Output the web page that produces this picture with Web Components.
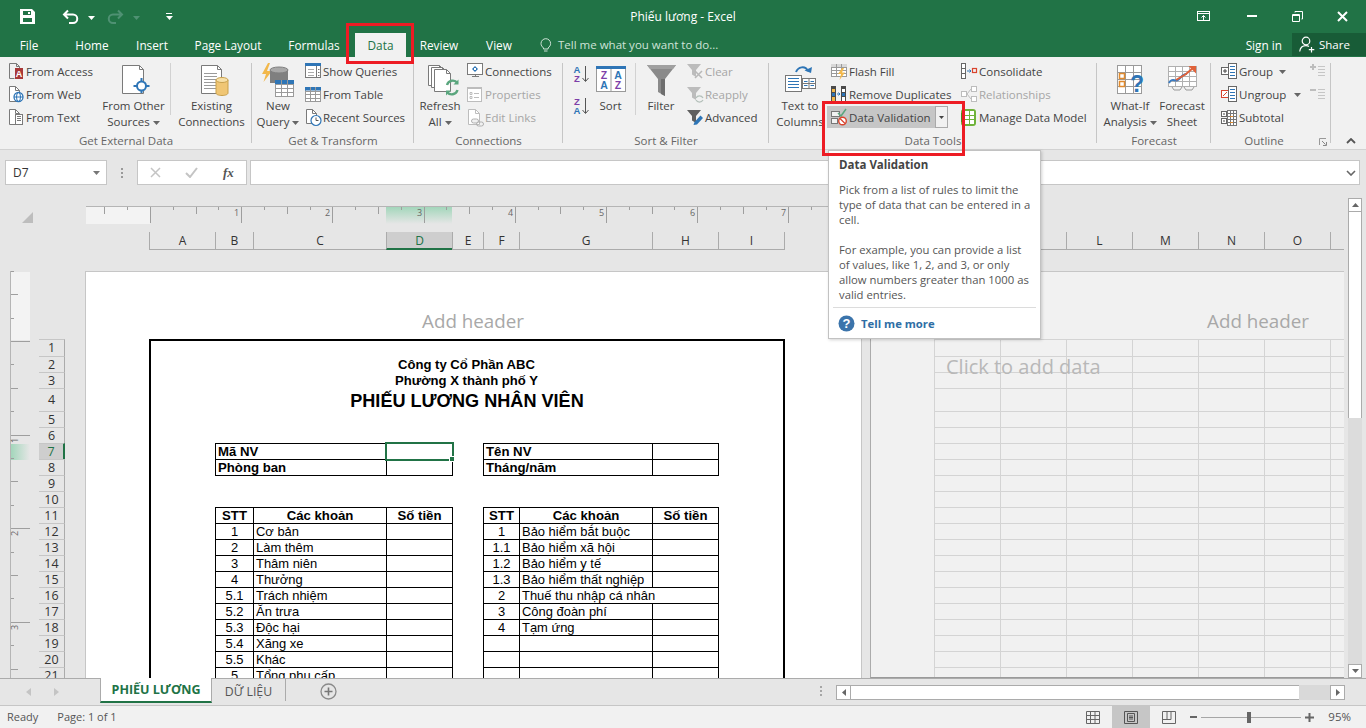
<!DOCTYPE html>
<html lang="vi"><head><meta charset="utf-8"><title>Phiếu lương - Excel</title>
<style>
html,body{margin:0;padding:0;background:#e6e6e6;overflow:hidden}
body{font-family:"Open Sans","Noto Sans",sans-serif;font-size:11.5px;color:#444}
x-tab[active]{color:#217346}
</style></head><body>
<x-app>
  <x-titlebar>Phiếu lương - Excel</x-titlebar>
  <x-tabs>
    <x-tab style="width:58px">File</x-tab><x-tab style="width:68px">Home</x-tab><x-tab style="width:52px">Insert</x-tab><x-tab style="width:100px">Page Layout</x-tab><x-tab style="width:72px;margin-right:5px">Formulas</x-tab><x-tab active style="width:51px">Data</x-tab><x-tab style="width:66px">Review</x-tab><x-tab style="width:54px">View</x-tab>
  </x-tabs>
  <x-ribbon>
    <x-group w="252" label="Get External Data">
      <x-col left="7" w="99"><x-small icon="access">From Access</x-small><x-small icon="web">From Web</x-small><x-small icon="text">From Text</x-small></x-col>
      <x-big w="69" icon="other" caret>From Other<br>Sources</x-big>
      <x-vsep w="3"></x-vsep>
      <x-big w="81" icon="existing">Existing<br>Connections</x-big>
    </x-group>
    <x-group w="162" label="Get &amp; Transform">
      <x-big w="52" icon="newquery" caret>New<br>Query</x-big>
      <x-col w="110"><x-small icon="showq">Show Queries</x-small><x-small icon="fromtable">From Table</x-small><x-small icon="recent">Recent Sources</x-small></x-col>
    </x-group>
    <x-group w="149" label="Connections">
      <x-big w="52" icon="refresh" caret>Refresh<br>All</x-big>
      <x-col w="97"><x-small icon="conn">Connections</x-small><x-small icon="props" off>Properties</x-small><x-small icon="links" off>Edit Links</x-small></x-col>
    </x-group>
    <x-group w="206" label="Sort &amp; Filter">
      <x-sortcol></x-sortcol>
      <x-big w="31" icon="sortbig">Sort</x-big>
      <x-vsep w="10" side="right"></x-vsep>
      <x-big w="50" icon="filter">Filter</x-big>
      <x-col w="83"><x-small icon="clear" off>Clear</x-small><x-small icon="reapply" off>Reapply</x-small><x-small icon="advanced">Advanced</x-small></x-col>
    </x-group>
    <x-group w="328" label="Data Tools">
      <x-big w="60" icon="t2c" style="margin-left:1px">Text to<br>Columns</x-big>
      <x-col w="130"><x-small icon="flash">Flash Fill</x-small><x-small icon="dedupe">Remove Duplicates</x-small><x-small icon="datav" hot>Data Validation</x-small></x-col>
      <x-col w="137"><x-small icon="consol">Consolidate</x-small><x-small icon="rel" off>Relationships</x-small><x-small icon="model">Manage Data Model</x-small></x-col>
    </x-group>
    <x-group w="114" label="Forecast">
      <x-big w="60" icon="whatif" caret style="margin-left:3px">What-If<br>Analysis</x-big>
      <x-big w="44" icon="forecast">Forecast<br>Sheet</x-big>
    </x-group>
    <x-group w="120" label="Outline" launcher>
      <x-col left="9" w="98"><x-small icon="group" drop="59">Group</x-small><x-small icon="ungroup" drop="74">Ungroup</x-small><x-small icon="subtotal">Subtotal</x-small></x-col>
      <x-col w="22"><x-small icon="showd" off></x-small><x-small icon="hided" off></x-small></x-col>
    </x-group>
    <x-collapse></x-collapse>
  </x-ribbon>
  <x-formula></x-formula>
  <x-sheet></x-sheet>
  <x-tabbar></x-tabbar>
  <x-status></x-status>
  <x-tooltip></x-tooltip>
  <x-redbox x="346" y="23" w="68" h="41"></x-redbox>
  <x-redbox x="822" y="101" w="143" h="55"></x-redbox>
</x-app>
<script>
const G='#7a7a7a',B='#2e75b6',L='#a9a9a9',LF='Liberation Sans';
const S=(w,h,b)=>`<svg xmlns="http://www.w3.org/2000/svg" width="${w}" height="${h}" viewBox="0 0 ${w} ${h}" fill="none" style="display:block;overflow:visible">${b}</svg>`;
const page=(x,y,w,h,c=G,f='#fff',d=4)=>`<path d="M${x}.5 ${y}.5h${w-d}l${d} ${d}v${h-d}h-${w}z" stroke="${c}" fill="${f}"/><path d="M${x+w-d}.5 ${y}.5v${d}h${d}" stroke="${c}"/>`;
const lines=(x,y,w,n,gap=3,c=G)=>{let s='';for(let i=0;i<n;i++)s+=`<path d="M${x} ${y+i*gap}.5h${w}" stroke="${c}"/>`;return s};
const T=(x,y,t,c,sz=9,w=700)=>`<text x="${x}" y="${y}" font-family="${LF}" font-size="${sz}" font-weight="${w}" fill="${c}" text-anchor="middle">${t}</text>`;
const tbl=(x,y,cw,rh,nc,nr,head,lc='#9a9a9a')=>{let s=`<rect x="${x}.5" y="${y}.5" width="${cw*nc}" height="${rh*nr}" fill="#fff" stroke="${lc}"/>`;if(head)s+=`<rect x="${x}" y="${y}" width="${cw*nc+1}" height="${rh}" fill="${head}"/>`;for(let i=1;i<nc;i++)s+=`<path d="M${x+i*cw}.5 ${y}v${rh*nr}" stroke="${lc}"/>`;for(let j=1;j<nr;j++)s+=`<path d="M${x} ${y+Math.round(j*rh)}.5h${cw*nc}" stroke="${lc}"/>`;return s};
const funnel=(f,st='none')=>`<path d="M1 2h14l-5 6v7l-4-2.5V8z" fill="${f}" stroke="${st}"/>`;
const ICON={
 save:S(15,15,`<path fill="#fff" fill-rule="evenodd" d="M0 0h12l3 3v12H0zM3 2v4h8V2zM3 9v4h9V9z"/><rect x="8" y="3" width="2" height="2" fill="#fff"/>`),
 undo:S(17,16,`<path d="M6 1.5 2 5.5l4 4M2 5.5h9a4 4 0 0 1 0 8.5H7" stroke="#fff" stroke-width="2"/>`),
 redo:S(17,16,`<path d="M11 1.5l4 4-4 4M15 5.5H6a4 4 0 0 0 0 8.5h3" stroke="#4f9173" stroke-width="2"/>`),
 cust:S(9,8,`<path d="M1 .5h6" stroke="#fff"/><path d="M1 3h7L4.5 7z" fill="#fff"/>`),
 ribbon:S(14,11,`<rect x=".5" y=".5" width="12" height="9" stroke="#fff"/><path d="M1 2.5h11" stroke="#fff"/><path d="M6.5 9V4.5M4.5 6.5l2-2 2 2" stroke="#fff"/>`),
 min:S(10,3,`<rect width="10" height="2" fill="#fff"/>`),
 rest:S(11,11,`<path d="M.5 3.5h7v7h-7zM.5 4.5h7" stroke="#fff"/><path d="M3 1.5V.5h7.5V8h-1" stroke="#fff"/>`),
 close:S(11,11,`<path d="M1 1l9 9M10 1l-9 9" stroke="#fff" stroke-width="2"/>`),
 bulb:S(12,14,`<path d="M3.5 10C2 8.5 1 7.500 1 5.500a4.800 4.800 0 0 1 9.600 0c0 2-1 3-2.500 4.500v1H3.500zM4 13h3.500" stroke="#cfe3d8"/>`),
 person:S(17,17,`<circle cx="7" cy="5" r="3.800" stroke="#fff" stroke-width="1.200"/><path d="M.7 15.500c.5-3.500 2.500-5.800 6.300-5.800 1.200 0 2.200.3 3 .8" stroke="#fff" stroke-width="1.200"/><path d="M12.500 11v5.500M9.800 13.700h5.500" stroke="#fff" stroke-width="1.200"/>`),
 access:S(19,19,`<path d="M2.500 1.500h7l3 3v2M2.500 1.500v15h5" stroke="${G}"/><path d="M9.500 1.500v3h3" stroke="${G}"/><rect x="8" y="6" width="8" height="11" fill="#a93838"/>${T(12,15,'A','#fff',9)}`),
 web:S(19,19,`${page(2,1,10,15)}<circle cx="11.500" cy="12" r="4.500" fill="#fff" stroke="${B}" stroke-width="1.300"/><ellipse cx="11.500" cy="12" rx="2" ry="4.500" stroke="${B}"/><path d="M7 12h9" stroke="${B}"/>`),
 text:S(19,19,`${page(2,1,10,15)}<rect x="8.500" y="6.500" width="7" height="10" fill="#fff" stroke="${G}"/>${lines(10,8,4,3,2)}`),
 other:S(32,36,`${page(4,4,21,28)}<path d="M15.500 25h16M23.500 17v15" stroke="${B}" stroke-width="2"/><circle cx="23.500" cy="25" r="4.500" fill="#fff" stroke="${B}" stroke-width="2"/>`),
 existing:S(36,36,`${page(7,4,20,28)}${lines(10,12,13,6,3,'#9a9a9a')}<path d="M22 19v13c0 1.500 2.700 2.500 6 2.500s6-1 6-2.500V19z" fill="#f0c674" stroke="#c9a14d"/><ellipse cx="28" cy="19" rx="6" ry="2.500" fill="#f7e0a8" stroke="#c9a14d"/>`),
 newquery:S(40,36,`<path d="M10 2 4 13h4l-2.500 8L14 10H9l3-8z" fill="#f2b84b"/><path d="M12 9v13h18V9z" fill="#7f7f7f"/><ellipse cx="21" cy="9" rx="9" ry="3" fill="#a8a8a8" stroke="#7f7f7f"/>${tbl(17,19,6,4,3,4,B)}`),
 showq:S(19,19,`<rect x="1.500" y="1.500" width="15" height="14" fill="#fff" stroke="${G}"/><rect x="1" y="1" width="16" height="3" fill="${B}"/><path d="M12.500 4v11" stroke="${G}"/>${lines(4,7,6,3,3,'#aaa')}${lines(14,7,1.500,3,3,'#777')}`),
 fromtable:S(19,19,tbl(1,2,5,3.500,3,4,B)),
 recent:S(19,19,`${page(2,1,10,14)}<circle cx="12" cy="12.500" r="5" fill="#fff" stroke="${B}" stroke-width="1.200"/><path d="M12 9.500v3h2.500" stroke="#555"/>`),
 refresh:S(40,36,`${page(8,4,15,20)}${page(11,6,15,20)}${page(14,8,16,22)}<path d="M27 24a6 6 0 0 1 10.500-2" stroke="#5aa67e" stroke-width="2.400"/><path d="M38.500 18.500v5h-5z" fill="#5aa67e"/><path d="M37.500 29a6 6 0 0 1-10.500 2" stroke="#5aa67e" stroke-width="2.400"/><path d="M26 34.500v-5h5z" fill="#5aa67e"/>`),
 conn:S(19,19,`<rect x="1.500" y="1.500" width="15" height="11" fill="#fff" stroke="${G}"/><path d="M6 14.500h7M9.500 13v1" stroke="${G}"/><path d="M9 4l3 3-3 3-3-3z" fill="${B}"/><rect x="8" y="6" width="2" height="2" fill="#fff"/>`),
 props:S(19,19,`<rect x="1.500" y="2.500" width="14" height="14" fill="#fff" stroke="#bdbdbd"/><rect x="1" y="2" width="15" height="2" fill="#bdbdbd"/><path d="M4 7.500h2v2H4zM4 11.500h2v2H4zM8 8.500h5M8 12.500h5" stroke="#bdbdbd"/>`),
 links:S(19,19,`${page(2,1,11,15,'#bdbdbd')}<rect x="5.500" y="11" width="7" height="4" rx="2" stroke="#b0b0b0" fill="#f1f1f1"/><rect x="10.500" y="14" width="7" height="4" rx="2" stroke="#b0b0b0"/>`),
 az:S(19,19,T(5,8,'A',B,9.500)+T(5,17,'Z','#7d3fa8',9.500)+`<path d="M13.500 1v15M10.500 13l3 3.500 3-3.500" stroke="#555"/>`),
 za:S(19,19,T(5,8,'Z','#7d3fa8',9.500)+T(5,17,'A',B,9.500)+`<path d="M13.500 1v15M10.500 13l3 3.500 3-3.500" stroke="#555"/>`),
 sortbig:S(34,36,`<rect x="2.500" y="5.500" width="29" height="25" fill="#fff" stroke="#999"/><rect x="2" y="5" width="30" height="3" fill="${B}"/><path d="M17 8v22" stroke="#999"/>`+T(10,18,'Z','#7d3fa8',10.500)+T(24,18,'A',B,10.500)+T(10,28,'A',B,10.500)+T(24,28,'Z','#7d3fa8',10.500)),
 filter:S(36,36,`<path d="M4 4h29L22 18v17l-7-4V18z" fill="#8a8a8a"/><path d="M4 4h29l-3 4H7z" fill="#a0a0a0"/><path d="M18 18v15l4 2V18z" fill="#6e6e6e"/>`),
 clear:S(19,19,funnel('#bcbcbc')+`<path d="M9 9l7 7M16 9l-7 7" stroke="#b8b8b8" stroke-width="1.500"/>`),
 reapply:S(19,19,funnel('#bcbcbc')+`<path d="M10 13a4 4 0 0 1 7 0M17 15a4 4 0 0 1-7 0" stroke="#b4c0ba" stroke-width="1.300"/>`),
 advanced:S(19,19,funnel('#5f5f5f')+`<path d="M7.500 17l1-3 6-6.500 2.500 2.500-6 6.500z" fill="${B}"/>`),
 t2c:S(36,36,`<path d="M14 11c2-5 9-7 12-1" stroke="${B}" stroke-width="2"/><path d="M22.500 9.500 29 12l1-6z" fill="${B}"/><rect x="3.500" y="14.500" width="16" height="16" fill="#fff" stroke="#777"/>${lines(6,17,11,4,3,B)}<rect x="20.500" y="17.500" width="13" height="10" fill="#fff" stroke="#777"/><path d="M27 18v9M21 22.500h12" stroke="#777"/><path d="M22 20.500h3.500M28.500 20.500H32M22 24.500h3.500M28.500 24.500H32" stroke="${B}"/>`),
 flash:S(19,19,tbl(1,2,5,3,3,4,'#d8d8d8')+`<path d="M12 6l-4 6h3l-1.500 6L15 10.500h-3l2-4.500z" fill="#f2b84b"/>`),
 dedupe:S(19,19,`<rect x="1" y="1" width="5" height="16" fill="#4a4a4a"/><rect x="2" y="4" width="3" height="3" fill="#f2b84b"/><rect x="2" y="8" width="3" height="3" fill="${B}"/><rect x="2" y="12" width="3" height="4" fill="#f2b84b"/><rect x="11" y="1" width="5" height="16" fill="#4a4a4a"/><rect x="12" y="4" width="3" height="3" fill="#fff"/><rect x="12" y="8" width="3" height="3" fill="${B}"/><rect x="12" y="12" width="3" height="4" fill="#fff"/><path d="M7 9h3M8.500 7.500 10 9l-1.500 1.500" stroke="${B}"/>`),
 datav:S(19,19,`<rect x="1.500" y="3.500" width="8" height="5" fill="#f1f1f1" stroke="#777"/><rect x="1.500" y="10.500" width="6" height="5" fill="#f1f1f1" stroke="#777"/><path d="M8 5l3 3 5-7" stroke="#5aa67e" stroke-width="1.500"/><circle cx="12.500" cy="13" r="3.800" fill="#fff" stroke="#d9442e" stroke-width="1.400"/><path d="M10 10.500l5 5" stroke="#d9442e" stroke-width="1.300"/>`),
 consol:S(19,19,`<rect x="1.500" y="1.500" width="4" height="15" fill="#fff" stroke="#666"/><path d="M1 6.500h5M1 11.500h5" stroke="#666"/><path d="M7 9h4M9.500 7.500 11 9l-1.500 1.500" stroke="${B}"/><rect x="12.500" y="6.500" width="4" height="4" stroke="#d9442e" stroke-width="1.200"/>`),
 rel:S(19,19,`<g stroke="#bdbdbd"><rect x="1.500" y="6.500" width="5" height="5" fill="#fff"/><rect x="11.500" y="1.500" width="5" height="5" fill="#fff"/><rect x="11.500" y="11.500" width="5" height="5" fill="#fff"/><path d="M7 9l4-5M7 9l4 5"/></g>`),
 model:S(19,19,`<rect x="1" y="1" width="15" height="17" rx="3" fill="#6fb33a"/><rect x="5" y="3" width="9" height="13" fill="#fff"/><path d="M9.500 3v13M5 7.500h9M5 11.500h9" stroke="#6fb33a"/><rect x="1" y="5" width="4" height="9" fill="#4f8f24"/>`),
 whatif:S(40,36,`${tbl(7,4,8,7,3,4,null,'#9a9a9a')}<rect x="9.500" y="12.500" width="5" height="5" fill="#fff" stroke="#e08a2e" stroke-width="1.500"/><rect x="9.500" y="20.500" width="5" height="5" fill="#fff" stroke="#e08a2e" stroke-width="1.500"/>${T(27,31,'?',B,23)}`),
 forecast:S(44,36,`${tbl(8,5,7,5,4,4,null,'#b0b0b0')}<path d="M9 22c3-6 6-1 9-3s5-7 9-6" stroke="#3d7cc0" stroke-width="2" /><path d="M16 19l5-3 5-3 7-6" stroke="#e0623a" stroke-width="2"/><path d="M28.500 5H36v7.500z" fill="#e0623a"/><path d="M12 26l2 3h6l2-3M24 26l2 3h6l2-3" stroke="#999"/>`),
 group:S(19,19,`<rect x="1.500" y="5.500" width="7" height="7" fill="#fff" stroke="#666"/><path d="M3 9h4M5 7v4" stroke="#444"/><rect x="8.500" y="1.500" width="8" height="15" fill="#fff" stroke="#666"/>${lines(10,4,5,4,3,B)}`),
 ungroup:S(19,19,`<rect x="1.500" y="5.500" width="7" height="7" fill="#fff" stroke="#d9442e"/><path d="M3 11l4-4" stroke="#d9442e"/><rect x="8.500" y="1.500" width="8" height="15" fill="#fff" stroke="#666"/>${lines(10,4,5,4,3,B)}`),
 subtotal:S(19,19,`<rect x="1.500" y="3.500" width="5" height="5" fill="#fff" stroke="#666"/><rect x="1.500" y="10.500" width="5" height="5" fill="#fff" stroke="#666"/><path d="M3 6h2M3 13h2" stroke="#444"/>${tbl(7,2,3,3,3,5,null,'#777')}<rect x="10" y="8" width="3" height="1" fill="#e08a2e"/><rect x="10" y="14" width="3" height="1" fill="#e08a2e"/>`),
 showd:S(19,19,`<path d="M1 5h6M4 2v6" stroke="#bdbdbd" stroke-width="2"/>${lines(9,4,7,4,3,'#c6c6c6')}`),
 hided:S(19,19,`<path d="M1 5h6" stroke="#bdbdbd" stroke-width="2"/>${lines(9,4,7,4,3,'#c6c6c6')}`),
 help:S(17,17,`<circle cx="8.500" cy="8.500" r="8" fill="#3b74ab"/>${T(8.500,13,'?','#fff',13)}`),
};
function def(name,css,html,after){customElements.define(name,class extends HTMLElement{connectedCallback(){if(this.shadowRoot)return;const s=this.attachShadow({mode:'open'});s.innerHTML=`<style>${css}</style>`+(typeof html==='function'?html(this):html);if(after)after(this,s);}});}
const caret=(c='#666')=>`<svg width="7" height="4" style="display:inline-block;vertical-align:middle;margin-left:3px"><path d="M0 0h7L3.500 4z" fill="${c}"/></svg>`;

def('x-app',`:host{display:flex;flex-direction:column;width:1366px;height:728px;position:relative;overflow:hidden;background:#e6e6e6}`,`<slot></slot>`);

def('x-titlebar',`:host{display:grid;grid-template-columns:1fr auto 1fr;align-items:center;height:33px;background:#217346;color:#fff;font-size:12px}
 .l{display:flex;align-items:center;padding-left:20px}.r{display:flex;justify-content:flex-end;align-items:center}
 .r span{width:46px;display:flex;justify-content:center}`,
 ()=>`<div class="l">${ICON.save}<span style="margin-left:27px">${ICON.undo}</span><span style="margin-left:6px">${caret('#fff')}</span><span style="margin-left:12px">${ICON.redo}</span><span style="margin-left:6px">${caret('#4f9173')}</span><span style="margin-left:25px">${ICON.cust}</span></div><slot></slot><div class="r"><span style="margin-right:2px">${ICON.ribbon}</span><span>${ICON.min}</span><span style="width:44px">${ICON.rest}</span><span style="margin-right:1px">${ICON.close}</span></div>`);

def('x-tabs',`:host{display:flex;align-items:stretch;height:24px;background:#217346;color:#fff;font-size:11.800px;line-height:22px}
 .tell{display:flex;align-items:center;gap:6px;margin-left:14px;color:#cfe3d8;font-size:11.500px}.sign{margin-left:auto;display:flex;align-items:center;padding-right:10px}
 .share{width:74px;background:#185c37;display:flex;align-items:center;gap:3px;padding-left:7px;box-sizing:border-box;margin-bottom:1px;font-size:11.500px}`,
 ()=>`<slot></slot><div class="tell">${ICON.bulb}<span>Tell me what you want to do...</span></div><div class="sign">Sign in</div><div class="share">${ICON.person}<span>Share</span></div>`);
def('x-tab',`:host{display:flex;align-items:center;justify-content:center;color:#fff;padding-bottom:1px;box-sizing:border-box}:host([active]){background:#f1f1f1;color:#217346}`,`<slot></slot>`);

def('x-ribbon',`:host{display:flex;height:93px;box-sizing:border-box;background:#f1f1f1;border-bottom:1px solid #d2d2d2;font-size:11.5px;color:#444}`,`<slot></slot>`);
def('x-group',`:host{display:flex;flex-direction:column;box-sizing:border-box;padding-top:4px;position:relative;flex:none}
 .c{display:flex;height:69px}.lab{text-align:center;color:#666;line-height:22px;height:19px}
 :host([launcher]) .lab{padding-right:14px}
 .sep{position:absolute;right:0;top:6px;bottom:6px;width:1px;background:#c6c6c6}
 .la{position:absolute;right:4px;bottom:3px}`,
 h=>{h.style.width=h.getAttribute('w')+'px';return `<div class="c"><slot></slot></div><div class="lab">${h.getAttribute('label').replace('&','&amp;')}</div><div class="sep"></div>${h.hasAttribute('launcher')?`<svg class="la" width="8" height="8"><path d="M.5 7V.5H7" stroke="#999" fill="none"/><path d="M3 3l3.500 3.500M7.500 4v3.500H4" stroke="#888" fill="none"/></svg>`:''}`});
def('x-col',`:host{display:flex;flex-direction:column;box-sizing:border-box;margin-top:-1px;flex:none}`,h=>{h.style.width=h.getAttribute('w')+'px';if(h.hasAttribute('left'))h.style.paddingLeft=h.getAttribute('left')+'px';return `<slot></slot>`});
def('x-small',`:host{display:flex;align-items:center;height:23px;white-space:nowrap;position:relative;gap:0}
 :host([off]){color:#a6a6a6}.i{width:19px;flex:none}
 :host([hot]){background:#c6c6c6;margin:0 0 1px -3px;padding-left:3px;height:22px;width:121px;box-sizing:border-box}
 .drop{position:absolute;right:0;top:0;bottom:0;width:13px;background:#f1f1f1;border:1px solid #aaa;box-sizing:border-box;display:flex;align-items:center;justify-content:center}
 .dc{position:absolute;top:10px}`,
 h=>`<span class="i">${ICON[h.getAttribute('icon')]}</span><slot></slot>${h.hasAttribute('hot')?`<span class="drop"><svg width="5" height="3"><path d="M0 0h5L2.500 3z" fill="#444"/></svg></span>`:''}${h.hasAttribute('drop')?`<svg class="dc" style="left:${h.getAttribute('drop')}px" width="7" height="4"><path d="M0 0h7L3.500 4z" fill="#666"/></svg>`:''}`);
def('x-big',`:host{display:flex;flex-direction:column;align-items:center;white-space:nowrap;flex:none}
 .i{height:36px;margin-bottom:1px}.t{text-align:center;line-height:16px}`,
 h=>{h.style.width=h.getAttribute('w')+'px';return `<div class="i">${ICON[h.getAttribute('icon')]}</div><div class="t"><slot></slot>${h.hasAttribute('caret')?caret():''}</div>`});
def('x-vsep',`:host{display:block;position:relative;flex:none}div{position:absolute;top:2px;height:52px;width:1px;background:#d2d2d2;left:2px}`,h=>{h.style.width=h.getAttribute('w')+'px';return `<div ${h.getAttribute('side')?'style="left:9px"':''}></div>`});
def('x-sortcol',`:host{display:flex;flex-direction:column;gap:13px;width:32px;padding:4px 0 0 9px;box-sizing:border-box;flex:none}`,()=>ICON.az+ICON.za);
def('x-collapse',`:host{display:flex;flex:none;width:35px;align-items:flex-end;justify-content:flex-end;padding:0 10px 5px 0;box-sizing:border-box}`,`<svg width="10" height="6" style="display:block"><path d="M1 5l4-4 4 4" stroke="#555" stroke-width="1.800" fill="none"/></svg>`);

def('x-formula',`:host{display:flex;height:40px;box-sizing:border-box;padding:10px 6px 5px 5px;background:#e6e6e6;font-size:12px;color:#333}
 .b{background:#fff;border:1px solid #c6c6c6;box-sizing:border-box;display:flex;align-items:center}
 .n{width:102px;padding:0 6px 0 7px;justify-content:space-between}
 .d{width:30px;display:flex;flex-direction:column;gap:2px;align-items:center;justify-content:center}.d i{width:2px;height:2px;background:#999}
 .f{width:110px;padding:0;position:relative}.f>*{flex:none}.x{flex:1;margin-left:3px;justify-content:flex-end;padding-right:3px}`,
 `<div class="b n"><span>D7</span><svg width="7" height="4"><path d="M0 0h7L3.500 4z" fill="#777"/></svg></div>
 <div class="d"><i></i><i></i><i></i></div>
 <div class="b f"><svg width="11" height="11" style="margin-left:12px"><path d="M1 1l9 9M10 1l-9 9" stroke="#c4c4c4" stroke-width="1.500"/></svg><svg width="13" height="11" style="margin-left:24px"><path d="M1 6l4 4 7-9" stroke="#c4c4c4" stroke-width="2" fill="none"/></svg><span style="font:italic bold 13px 'Liberation Serif',serif;color:#555;margin-left:25px">fx</span></div>
 <div class="b x"><svg width="10" height="6"><path d="M1 1l4 4 4-4" stroke="#666" stroke-width="1.600" fill="none"/></svg></div>`);

const COLS=[['A',66],['B',38],['C',133],['D',66],['E',31],['F',36],['G',133],['H',66],['I',66]];
const RH=[17,16,16,23];for(let i=0;i<17;i++)RH.push(16);
const rowsTpl=RH.map(h=>h+'px').join(' ');

def('x-sheet',`:host{display:grid;grid-template-columns:85px 1259px 22px;grid-template-rows:81px 407px;height:488px;overflow:hidden;background:#e6e6e6}
 .corner{padding:21px 0 0 22px}
 .top{padding-top:16px;overflow:hidden}.g{overflow:hidden;display:flex;gap:8px}
 .left{display:flex;overflow:hidden}.sb{grid-row:1/3;grid-column:3}`,
 `<div class="corner"><svg width="11" height="11"><path d="M11 0v11H0z" fill="#bdbdbd"/></svg></div>
 <div class="top"><x-hruler></x-hruler><x-colheads></x-colheads></div>
 <x-vscroll class="sb"></x-vscroll>
 <div class="left"><x-vruler></x-vruler><x-rowheads></x-rowheads></div>
 <div class="g"><x-page-one></x-page-one><x-page-two></x-page-two></div>`);

def('x-hruler',`:host{display:block;height:18px;margin:0 0 8px 1px;width:775px;position:relative;border-top:1px solid #b5b5b5;box-sizing:border-box}
 svg{display:block}`,()=>{let s=`<rect x="0" y="0" width="64" height="17" fill="#f3f3f3"/><defs><linearGradient id="gh" x1="0" y1="0" x2="0" y2="1"><stop offset="0" stop-color="#a3d6bb"/><stop offset="1" stop-color="#e6e6e6"/></linearGradient></defs><rect x="300" y="0" width="66" height="17" fill="url(#gh)"/>`;
 for(let k=-2;k<32;k++){const x=Math.round(64+k*22.8)+.5;if(x<0||x>775)continue;const h=k%4===0?16:(k%2===0?7:3);s+=`<path d="M${x} 0v${h}" stroke="#9e9e9e"/>`;if(k%4===0&&k>0)s+=`<text x="${x-5}" y="9" font-size="9" font-family="Open Sans" fill="#666" text-anchor="middle">${k/4}</text>`;}
 return S(775,17,s)});
def('x-colheads',`:host{display:flex;height:18px;box-sizing:border-box;padding-left:64px;font-size:12px;color:#333}
 div{box-sizing:border-box;border-left:1px solid #ababab;border-bottom:1px solid #ababab;display:flex;align-items:center;justify-content:center;flex:none}
 .s{border:0}.on{background:#cecece;border-bottom:2px solid #217346;color:#217346}`,
 ()=>COLS.map(c=>`<div class="${c[0]==='D'?'on':''}" style="width:${c[1]}px">${c[0]}</div>`).join('')+`<div class="s" style="width:150px;border-left:1px solid #ababab"></div>`+[['',66],['',66],['L',66],['M',66],['N',66],['O',66],['',14]].map(c=>`<div style="width:${c[1]}px">${c[0]}</div>`).join(''));
def('x-vruler',`:host{display:block;width:20px;margin-left:10px;border-left:1px solid #b5b5b5;box-sizing:content-box;flex:none}svg{display:block}`,()=>{let s=`<rect x="0" y="1" width="19" height="68" fill="#f3f3f3"/><defs><linearGradient id="gv" x1="0" y1="0" x2="1" y2="0"><stop offset="0" stop-color="#a3d6bb"/><stop offset="1" stop-color="#e6e6e6"/></linearGradient></defs><rect x="0" y="173" width="19" height="16" fill="url(#gv)"/>`;
 for(let k=-3;k<15;k++){const y=Math.round(70+k*23.4)+.5;const w=k%4===0?19:(k%2===0?7:3);s+=`<path d="M0 ${y}h${w}" stroke="#9e9e9e"/>`;if(k%4===0&&k>0)s+=`<text transform="translate(7 ${y+5}) rotate(-90)" font-size="9" font-family="Open Sans" fill="#666" text-anchor="middle" x="0" y="0" dx="0">${k/4}</text>`;}
 return S(20,407,s)});
def('x-rowheads',`:host{display:flex;flex-direction:column;width:26px;margin-left:8px;padding-top:68px;flex:none;font-size:12.500px;color:#333;box-sizing:border-box;overflow:hidden}
 div{box-sizing:border-box;border-top:1px solid #c6c6c6;border-right:1px solid #ababab;display:flex;align-items:center;justify-content:center;flex:none;line-height:14px}
 .on{background:#cecece;border-right:2px solid #217346;color:#217346}`,
 ()=>RH.map((h,i)=>`<div class="${i===6?'on':''}" style="height:${h}px">${i+1}</div>`).join(''));

def('x-page-one',`:host{display:block;flex:none;width:777px;height:407px;box-sizing:border-box;background:#fff;border:1px solid #c6c6c6;border-bottom:0;overflow:hidden;font-family:"Liberation Sans",Arial,sans-serif;color:#000;font-size:12.950px}
 .h{height:67px;display:flex;align-items:flex-end;justify-content:center;padding:0 0 5px 0;box-sizing:border-box;font:18.800px "Open Sans",sans-serif;color:#a8a8a8;margin-left:-1px}
 .wrap{position:relative;margin-left:63px;width:636px}
 .wrap::after{content:"";position:absolute;left:0;top:0;right:0;height:600px;border:2px solid #000;box-sizing:border-box;pointer-events:none}
 .grid{display:grid;grid-template-columns:${COLS.map(c=>c[1]+'px').join(' ')};grid-template-rows:${rowsTpl}}
 .c{white-space:nowrap;display:flex;align-items:center;margin:1px 0 0 1px;outline:1px solid #000;padding-left:2px;min-width:0;overflow:visible}
 .t{display:flex;justify-content:center;align-items:center;font-weight:700;white-space:nowrap;grid-column:1/10;margin-top:1px;font-size:13.100px}
 .ctr{justify-content:center;padding:0}.bold{font-weight:700;font-size:13.200px}.sel{grid-row:7;grid-column:4;margin:-1px -2px -2px -1px;border:2px solid #217346;position:relative;z-index:2}
 .sel i{position:absolute;right:-3px;bottom:-3px;width:6px;height:6px;box-sizing:border-box;background:#217346;border:1px solid #fff}`,
 ()=>{const c=(r,cl,sp,t,k='')=>`<div class="c ${k}" style="grid-row:${r};grid-column:${cl}/span ${sp}">${t}</div>`;
 let h=`<div class="t" style="grid-row:2">Công ty Cổ Phần ABC</div><div class="t" style="grid-row:3">Phường X thành phố Y</div><div class="t" style="grid-row:4;font-size:18.100px;padding:3px 0 0 1px">PHIẾU LƯƠNG NHÂN VIÊN</div>`;
 h+=c(7,2,2,'Mã NV','bold')+c(7,4,1,'')+c(8,2,2,'Phòng ban','bold')+c(8,4,1,'');
 h+=c(7,6,2,'Tên NV','bold')+c(7,8,1,'')+c(8,6,2,'Tháng/năm','bold')+c(8,8,1,'');
 const head=(col)=>c(11,col,1,'STT','bold ctr')+c(11,col+1,1,'Các khoản','bold ctr')+c(11,col+2,1,'Số tiền','bold ctr');
 h+=head(2)+head(6);
 const L=[['1','Cơ bản'],['2','Làm thêm'],['3','Thâm niên'],['4','Thưởng'],['5.1','Trách nhiệm'],['5.2','Ăn trưa'],['5.3','Độc hại'],['5.4','Xăng xe'],['5.5','Khác'],['5','Tổng phụ cấp']];
 const R=[['1','Bảo hiểm bắt buộc'],['1.1','Bảo hiểm xã hội'],['1.2','Bảo hiểm y tế'],['1.3','Bảo hiểm thất nghiệp'],['2','Thuế thu nhập cá nhân'],['3','Công đoàn phí'],['4','Tạm ứng'],['',''],['',''],['','']];
 L.forEach((x,i)=>{const r=12+i;h+=c(r,2,1,x[0],'ctr')+c(r,3,1,x[1])+c(r,4,1,'')});
 R.forEach((x,i)=>{const r=12+i;h+=c(r,6,1,x[0],'ctr');if(i===4)h+=c(r,7,2,x[1]);else h+=c(r,7,1,x[1])+c(r,8,1,'')});
 return `<div class="h">Add header</div><div class="wrap"><div class="grid">${h}<div class="sel"><i></i></div></div></div>`});

def('x-page-two',`:host{display:block;flex:1;height:407px;box-sizing:border-box;background:#f1f1f1;border-left:1px solid #ababab;border-top:1px solid #c6c6c6;overflow:hidden;position:relative;border-bottom:1px solid #9a9a9a}
 .h{height:67px;display:flex;align-items:flex-end;justify-content:flex-end;padding:0 35px 5px 0;box-sizing:border-box;font:18.800px "Open Sans",sans-serif;color:#a8a8a8}
 .grid{margin-left:63px;display:grid;grid-template-columns:repeat(6,66px) 14px;grid-template-rows:${rowsTpl}}
 .grid i{border-top:1px solid #d4d4d4;border-left:1px solid #d4d4d4}
 .add{position:absolute;left:75px;top:81px;font:20px "Open Sans",sans-serif;color:#b8b8b8}`,
 ()=>{let h='';for(let r=0;r<RH.length;r++)for(let c=0;c<7;c++)h+='<i></i>';return `<div class="h">Add header</div><div class="grid">${h}</div><div class="add">Click to add data</div>`});

def('x-vscroll',`:host{display:flex;flex-direction:column;padding:8px 4px 0 4px;box-sizing:border-box;height:488px;position:relative}
 .b{width:14px;height:14px;box-sizing:border-box;background:#fff;border:1px solid #ababab;display:flex;align-items:center;justify-content:center;flex:none}
 .th{height:206px;background:#fff;border:1px solid #ababab;border-width:0 1px;box-sizing:border-box;flex:none}.tr{flex:1;background:#dcdcdc}`,
 `<div class="b"><svg width="7" height="4"><path d="M0 4h7L3.500 0z" fill="#666"/></svg></div><div class="th"></div><div class="tr"></div><div class="b"><svg width="7" height="4"><path d="M0 0h7L3.500 4z" fill="#666"/></svg></div>`);

def('x-tabbar',`:host{display:flex;align-items:stretch;height:28px;box-sizing:border-box;background:#e6e6e6;border-top:1px solid #ababab;border-bottom:1px solid #c6c6c6;font-size:12.300px;color:#555}
 .nav{width:100px;display:flex;align-items:center;padding-left:26px;gap:23px;box-sizing:border-box}
 .a{width:112px;background:#fff;margin-top:-1px;height:25px;border-left:1px solid #ababab;border-right:1px solid #ababab;border-bottom:2px solid #217346;display:flex;align-items:center;justify-content:center;color:#217346;font-weight:700;font-size:12.500px;box-sizing:border-box}
 .i{width:74px;display:flex;align-items:center;justify-content:center;border-right:1px solid #ababab;margin:0 0 4px;box-sizing:border-box;padding-top:2px}
 .p{margin-left:34px;display:flex;align-items:center;margin-bottom:2px}
 .dots{margin-left:483px;width:16px;display:flex;flex-direction:column;gap:2px;justify-content:center;align-items:flex-start;margin-bottom:2px}.dots i{width:2px;height:2px;background:#a6a6a6}
 .hs{display:flex;width:509px;height:15px;margin-top:6px}
 .hb{width:15px;height:15px;background:#fff;border:1px solid #ababab;box-sizing:border-box;display:flex;align-items:center;justify-content:center;flex:none}
 .ht{width:448px;background:#fff;border:1px solid #ababab;border-width:1px 0;box-sizing:border-box}.tk{flex:1;background:#d9d9d9}`,
 `<div class="nav"><svg width="5" height="8"><path d="M5 0v8L0 4z" fill="#c4c4c4"/></svg><svg width="5" height="8"><path d="M0 0v8l5-4z" fill="#c4c4c4"/></svg></div>
 <div class="a">PHIẾU LƯƠNG</div><div class="i">DỮ LIỆU</div>
 <div class="p"><svg width="17" height="17"><circle cx="8.500" cy="8.500" r="7.500" fill="none" stroke="#8a8a8a" stroke-width="1.300"/><path d="M4.500 8.500h8M8.500 4.500v8" stroke="#777" stroke-width="1.600"/></svg></div>
 <div class="dots"><i></i><i></i><i></i></div>
 <div class="hs"><div class="hb"><svg width="4" height="7"><path d="M4 0v7L0 3.500z" fill="#666"/></svg></div><div class="ht"></div><div class="tk"></div><div class="hb"><svg width="4" height="7"><path d="M0 0v7l4-3.500z" fill="#666"/></svg></div></div>`);

def('x-status',`:host{display:flex;align-items:center;height:22px;background:#f1f1f1;font-size:11px;color:#555;padding-left:7px;box-sizing:border-box;line-height:20px}
 .page{margin-left:19px}.r{margin-left:auto;display:flex;align-items:center;height:100%}
 .v{display:flex;align-items:center;justify-content:center;height:100%;flex:none}.on{background:#c6c6c6}
 .sl{position:relative;width:100px;height:1px;background:#a6a6a6;margin:0 4px}.sl i{position:absolute;left:46px;top:-5px;width:4px;height:11px;background:#666}`,
 `<span>Ready</span><span class="page">Page: 1 of 1</span><div class="r">
 <div class="v" style="width:38px"><svg width="14" height="13"><path d="M.5.5h13v12H.5zM.5 4.500h13M.5 8.500h13M4.500.5v12M9 .5v12" stroke="#666" fill="none"/></svg></div>
 <div class="v on" style="width:38px"><svg width="14" height="13"><path d="M.5.5h13v12H.5z" stroke="#555" fill="none"/><path d="M3.500 2.500h7v8h-7zM5 5h4M5 6.500h4M5 8h4" stroke="#555" fill="none"/></svg></div>
 <div class="v" style="width:38px"><svg width="14" height="13"><path d="M.5.5h13v12H.5zM.5 8.500h8.500V.5M5 .5V8.500" stroke="#666" fill="none"/></svg></div>
 <div class="v" style="width:9px;justify-content:flex-end"><svg width="7" height="2"><rect width="7" height="2" fill="#666"/></svg></div>
 <div class="sl"><i></i></div>
 <svg width="9" height="9"><path d="M0 4.500h9M4.500 0v9" stroke="#666" stroke-width="2"/></svg>
 <span style="margin:0 15px 0 14px;font-size:11.500px">95%</span></div>`);

def('x-tooltip',`:host{position:absolute;left:828px;top:150px;width:213px;height:189px;box-sizing:border-box;background:#fff;border:1px solid #c2c2c2;box-shadow:1px 1px 3px rgba(0,0,0,.18);padding:6px 4px 0 4px;font-size:11.300px;color:#555;z-index:5;white-space:nowrap}
 .in{padding:0 6px}b{display:block;color:#444;font-weight:700;font-size:11.500px;line-height:16px}
 p{margin:9px 0 0;line-height:15px}hr{border:0;border-top:1px solid #dcdcdc;margin:5px 0 0}
 .m{display:flex;align-items:center;gap:6px;margin:7px 0 0 5px;color:#2f6ea5;font-weight:700}`,
 ()=>`<div class="in"><b>Data Validation</b><p>Pick from a list of rules to limit the<br>type of data that can be entered in a<br>cell.</p><p style="margin-top:15px">For example, you can provide a list<br>of values, like 1, 2, and 3, or only<br>allow numbers greater than 1000 as<br>valid entries.</p></div><hr><div class="m">${ICON.help}<span>Tell me more</span></div>`);
def('x-redbox',`:host{position:absolute;box-sizing:border-box;border:3px solid #ed1c24;z-index:6;pointer-events:none}`,h=>{const a=k=>h.getAttribute(k)+'px';h.style.left=a('x');h.style.top=a('y');h.style.width=a('w');h.style.height=a('h');return ''});
</script>
</body></html>
